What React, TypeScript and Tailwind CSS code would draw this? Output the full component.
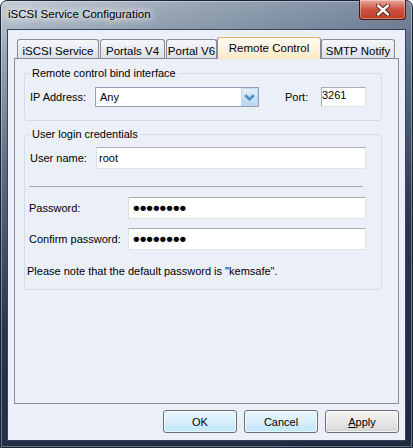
import React from "react";

const ui = "font-['Liberation_Sans',Arial,sans-serif] text-[11px] leading-[14px] text-black";

const Tab = ({ label, w, selected }: { label: string; w: string; selected?: boolean }) =>
  selected ? (
    <div
      className={`${w} relative z-10 -mb-px flex h-[22px] items-start justify-center rounded-t-[3px] border border-b-0 border-[#898c95] border-t-[#e8b35a] bg-linear-to-b from-[#fffcf4] to-[#fde9c6] pt-[3px] text-[11.5px]`}
    >
      {label}
    </div>
  ) : (
    <div
      className={`${w} flex h-[19px] items-start justify-center rounded-t-[3px] border border-b-0 border-[#898c95] bg-linear-to-b from-[#f6f7f9] to-[#dbe1ea] pt-[4px] text-[11.5px]`}
    >
      {label}
    </div>
  );

const TextBox = ({ w, value, dots }: { w: string; value?: string; dots?: boolean }) => (
  <div
    className={`${w} flex h-[22px] items-center border border-[#e2e3ea] border-t-[#abadb3] border-l-[#dbdfe6] bg-white pl-[2px]`}
  >
    {dots ? (
      <span className="pl-[2px] font-['Liberation_Sans',Arial,sans-serif] text-[19px] leading-[14px] font-bold">
        ••••••••
      </span>
    ) : (
      value
    )}
  </div>
);

const Button = ({ children, blue }: { children: React.ReactNode; blue?: boolean }) => (
  <button
    className={`flex h-[23px] w-[74px] items-center justify-center rounded-[3px] border border-[#707070] ${
      blue
        ? "bg-linear-to-b from-[#eaf6fd] via-[#d9effc] to-[#bee6fd]"
        : "bg-linear-to-b from-[#f2f2f2] via-[#e8e8e8] to-[#d5d5d5]"
    } shadow-[inset_0_0_0_1px_rgba(255,255,255,0.7)]`}
  >
    {children}
  </button>
);

export default function App() {
  return (
    <div
      className={`${ui} flex h-[448px] w-[413px] flex-col rounded-t-[7px] border border-[#1b2433] bg-[linear-gradient(165deg,#c4cdd7_0%,#97a5b6_10%,#5d6d84_30%,#26354c_60%,#1c2a40_100%)] shadow-[inset_0_0_0_1px_rgba(255,255,255,0.35)]`}
    >
      {/* title bar */}
      <div className="flex h-[28px] items-start justify-between">
        <span className="pl-[7px] pt-[6px] text-[11.5px] leading-[15px] text-black [text-shadow:0_0_6px_#fff,0_0_10px_#fff,0_0_14px_rgba(255,255,255,0.8)]">
          iSCSI Service Configuration
        </span>
        <div className="-mt-px mr-[6px] flex h-[20px] w-[47px] items-center justify-center rounded-b-[4px] border border-t-0 border-[#3d1a16] bg-linear-to-b from-[#e9a99b] via-[#c8513f] to-[#c13c22] shadow-[inset_0_0_0_1px_rgba(255,255,255,0.35)]">
          <svg width="14" height="12" viewBox="0 0 14 12">
            <path d="M2 1.5 L12 10.5 M12 1.5 L2 10.5" stroke="#4a1a12" strokeWidth="4.2" strokeLinecap="round" />
            <path d="M2 1.5 L12 10.5 M12 1.5 L2 10.5" stroke="#ffffff" strokeWidth="2.4" strokeLinecap="round" />
          </svg>
        </div>
      </div>

      {/* client area */}
      <div className="mx-[6px] flex h-[412px] flex-col border border-[#34435a] bg-[#ebeff7]">
        <div className="ml-[9px] mt-[7px] flex items-end">
          <Tab label="iSCSI Service" w="w-[82px]" />
          <div className="w-px" />
          <Tab label="Portals V4" w="w-[65px]" />
          <div className="w-px" />
          <Tab label="Portal V6" w="w-[51px]" />
          <Tab label="Remote Control" w="w-[104px]" selected />
          <Tab label="SMTP Notify" w="w-[74px]" />
        </div>

        <div className="ml-[6px] flex h-[346px] w-[385px] flex-col border border-[#898c95] bg-[#ebeff7]">
          <fieldset className="ml-[9px] mt-[7px] w-[358px] rounded-[3px] border border-[#d3dce6] px-[5px] pb-[13px]">
            <legend className="px-[2px]">Remote control bind interface</legend>
            <div className="mt-[7px] flex h-[20px] items-center">
              <span className="w-[65px]">IP Address:</span>
              <div className="flex h-[20px] w-[164px] items-center border border-[#8fa0b8] bg-white">
                <span className="flex-1 pl-[4px]">Any</span>
                <div className="flex h-[18px] w-[17px] items-center justify-center border border-[#c5daee] bg-linear-to-b from-[#e3effa] to-[#b9d6f1]">
                  <svg width="11" height="7" viewBox="0 0 11 7">
                    <path d="M1.2 1.2 L5.5 5.2 L9.8 1.2" stroke="#4e8ac6" strokeWidth="2.6" fill="none" />
                  </svg>
                </div>
              </div>
              <span className="ml-[26px] w-[36px]">Port:</span>
              <div className="flex h-[20px] w-[45px] items-start border border-[#e2e3ea] border-t-[#abadb3] border-l-[#abadb3] bg-white">
                3261
              </div>
            </div>
          </fieldset>

          <fieldset className="ml-[9px] mt-[6px] w-[358px] rounded-[3px] border border-[#d3dce6] px-[5px] pb-[11px]">
            <legend className="px-[2px]">User login credentials</legend>
            <div className="mt-[6px] flex items-center">
              <span className="w-[66px]">User name:</span>
              <TextBox w="w-[270px]" value="root" />
            </div>
            <div className="-ml-px mt-[17px] h-px w-[334px] bg-[#a3a6ab]" />
            <div className="mt-[10px] flex items-center">
              <span className="-ml-px w-[99px]">Password:</span>
              <TextBox w="w-[238px]" dots />
            </div>
            <div className="mt-[9px] flex items-center">
              <span className="-ml-px w-[99px]">Confirm password:</span>
              <TextBox w="w-[238px]" dots />
            </div>
            <p className="-ml-[3px] mt-[14px]">Please note that the default password is "kemsafe".</p>
          </fieldset>
        </div>

        <div className="mr-[6px] mt-[6px] flex justify-end gap-[7px]">
          <Button blue>OK</Button>
          <Button blue>Cancel</Button>
          <Button>
            <span>
              <span className="underline">A</span>pply
            </span>
          </Button>
        </div>
      </div>
    </div>
  );
}
